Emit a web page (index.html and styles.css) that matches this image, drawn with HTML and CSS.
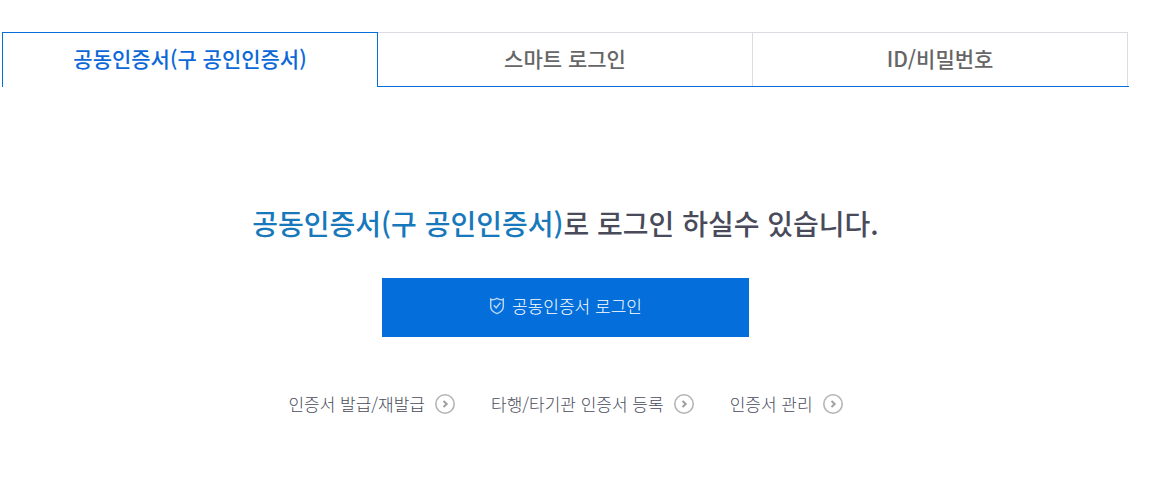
FILE: index.html
```
<!DOCTYPE html>
<html lang="ko">
<head>
    <meta charset="UTF-8">
    <meta name="viewport" content="width=device-width, initial-scale=1.0">
    <title>로그인</title>
    <link rel="stylesheet" href="styles.css">
</head>
<body>
    <div class="container">
        <div class="tabs" role="tablist">
            <button type="button" class="tab active" id="tab-cert" role="tab" aria-selected="true" aria-controls="cert">공동인증서(구 공인인증서)</button>
            <button type="button" class="tab" role="tab" aria-selected="false">스마트 로그인</button>
            <button type="button" class="tab" role="tab" aria-selected="false">ID/비밀번호</button>
        </div>
        <div class="login" id="cert" role="tabpanel" aria-labelledby="tab-cert">
            <h2 class="title"><strong>공동인증서(구 공인인증서)</strong>로 로그인 하실수 있습니다.</h2>
            <button type="button" class="loginBtn">
                <svg class="shield" viewBox="0 0 16 18" aria-hidden="true">
                    <path d="M1.7 1.2V2.6C4.4 3 6.4 2.6 8 1.4C9.6 2.6 11.6 3 14.3 2.6V1.2M1.7 2.4V9.5C1.7 13 4.5 15.3 8 16.6C11.5 15.3 14.3 13 14.3 9.5V2.4"/>
                    <path d="M4.8 8.2L7.2 10.8L11.4 5.8"/>
                </svg>
                <span>공동인증서 로그인</span>
            </button>
            <ul class="links">
                <li><a href="#">인증서 발급/재발급
                    <svg class="arrow" viewBox="0 0 20 20" aria-hidden="true"><circle cx="10" cy="10" r="9.2"/><path d="M8.5 7L11.7 10L8.5 13"/></svg></a></li>
                <li><a href="#">타행/타기관 인증서 등록
                    <svg class="arrow" viewBox="0 0 20 20" aria-hidden="true"><circle cx="10" cy="10" r="9.2"/><path d="M8.5 7L11.7 10L8.5 13"/></svg></a></li>
                <li><a href="#">인증서 관리
                    <svg class="arrow" viewBox="0 0 20 20" aria-hidden="true"><circle cx="10" cy="10" r="9.2"/><path d="M8.5 7L11.7 10L8.5 13"/></svg></a></li>
            </ul>
        </div>
    </div>
</body>
</html>
```
FILE: styles.css
```
* {
    margin: 0;
    padding: 0;
    box-sizing: border-box;
}
body {
    background-color: #fff;
    font-family: "Noto Sans CJK KR", sans-serif;
    color: #494b5b;
}
button {
    font-family: inherit;
    cursor: pointer;
}
.container {
    padding: 32px 27px 0 2px;
}
.tabs {
    display: flex;
    height: 55px;
    padding-right: 1px;
    border-bottom: 1px solid #046fdb;
}
.tab {
    flex: 1 1 0;
    padding-bottom: 4px;
    border: 1px solid #d9dde2;
    border-width: 1px 1px 0 0;
    background-color: #fff;
    color: #666;
    font-size: 21px;
    font-weight: 500;
    line-height: 30px;
}
.tab.active {
    margin-bottom: -1px;
    border-color: #046fdb;
    border-width: 1px 1px 0 1px;
    color: #0c68d9;
}
.login {
    display: flex;
    flex-direction: column;
    align-items: center;
    padding: 116px 0 60px;
}
.title {
    font-size: 28px;
    font-weight: 500;
    line-height: 40px;
    text-align: center;
}
.title strong {
    color: #1778bb;
    font-weight: inherit;
}
.loginBtn {
    display: flex;
    justify-content: center;
    align-items: center;
    gap: 7px;
    width: 367px;
    max-width: 100%;
    height: 59px;
    margin-top: 35px;
    padding-bottom: 4px;
    border: none;
    background-color: #046fdb;
    color: #fff;
    font-size: 17px;
    font-weight: 300;
    line-height: 24px;
}
.shield {
    width: 16px;
    height: 18px;
    fill: none;
    stroke: #b4d4f4;
    stroke-width: 1.5;
}
.links {
    display: flex;
    flex-wrap: wrap;
    justify-content: center;
    gap: 10px 36px;
    margin-top: 55px;
    list-style: none;
}
.links a {
    display: flex;
    align-items: center;
    gap: 10px;
    color: #494b5b;
    font-size: 17px;
    font-weight: 300;
    line-height: 24px;
    text-decoration: none;
}
.arrow {
    width: 20px;
    height: 20px;
    fill: none;
    stroke: #b4b4b4;
    stroke-width: 1.6;
}
.arrow path {
    stroke: #a0a0a0;
    stroke-width: 2;
}
```
